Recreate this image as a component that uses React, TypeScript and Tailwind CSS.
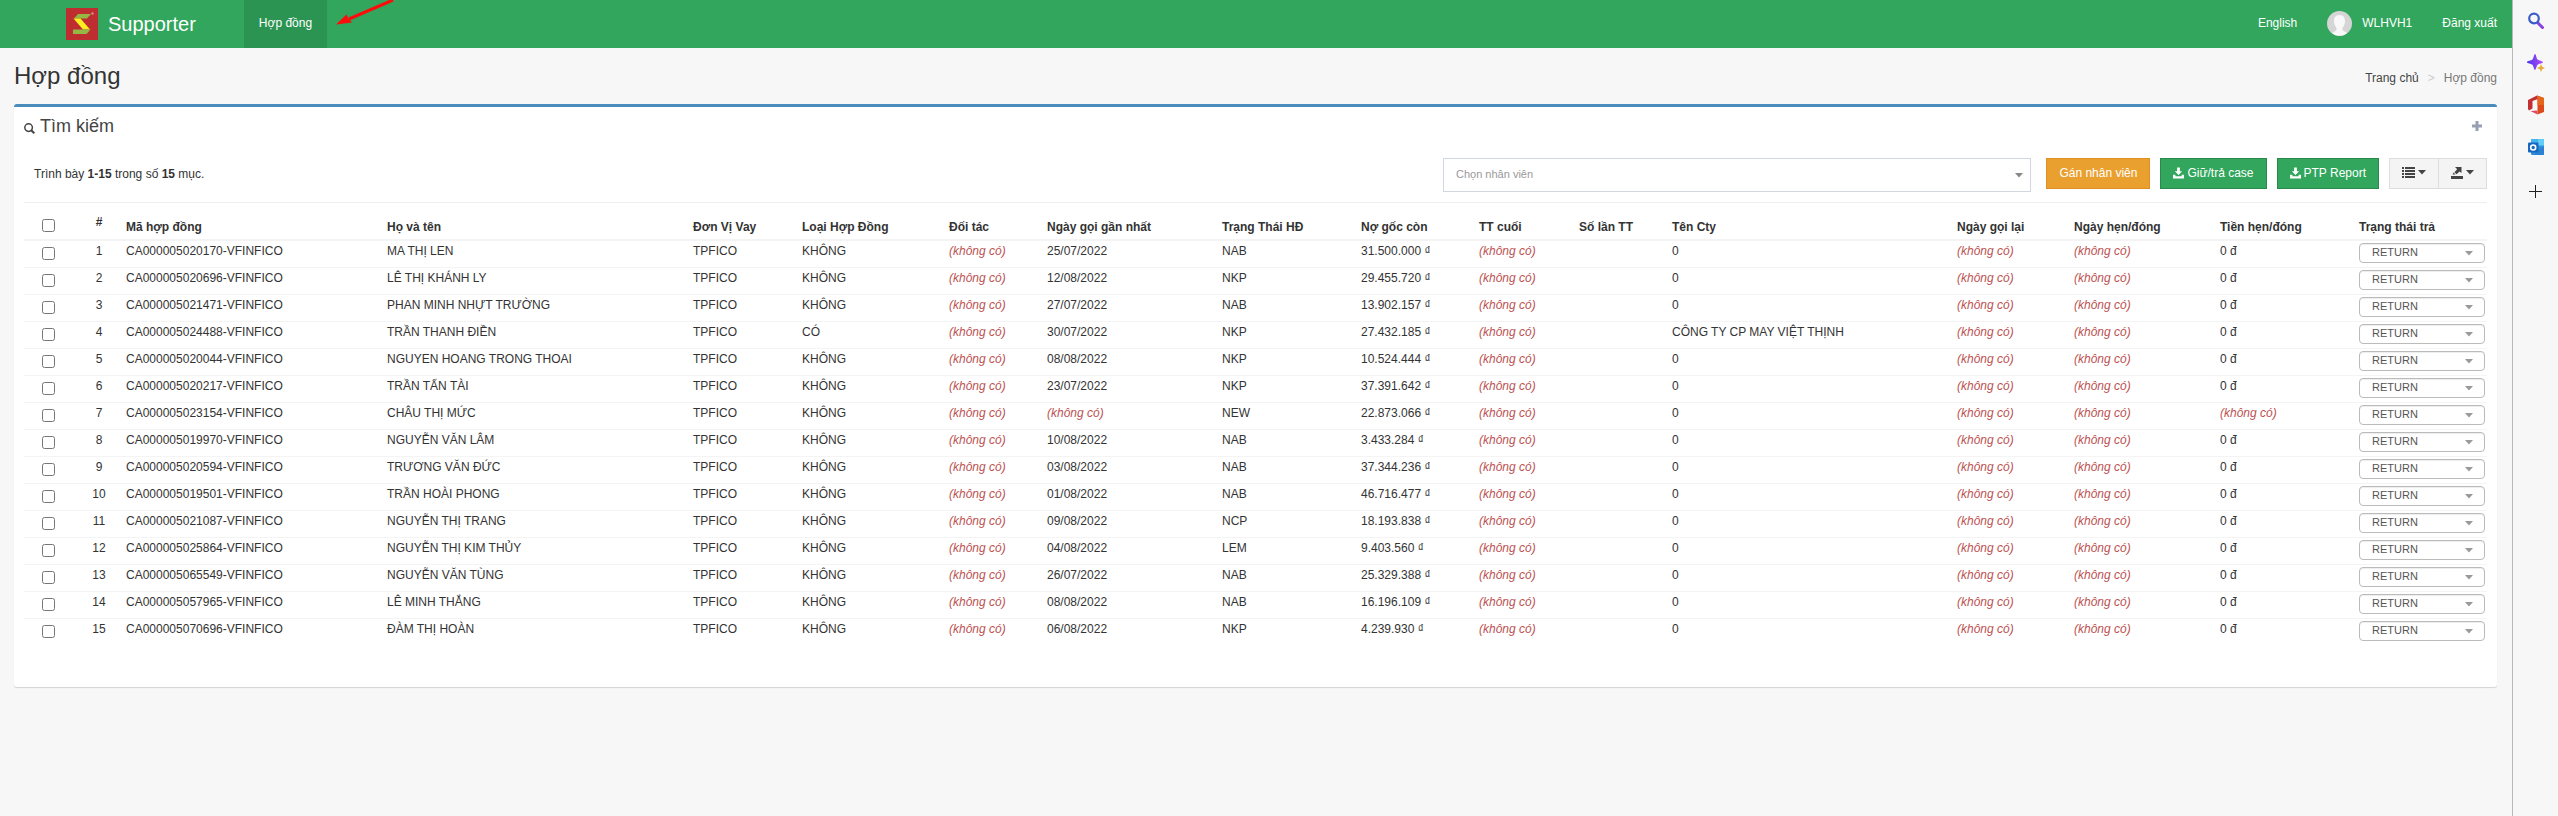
type Contract = {
  code: string;
  name: string;
  type?: string;
  lastCall?: string;
  status: string;
  debt: string;
  company?: string;
  promised?: string;
};

const contracts: Contract[] = [
  { code: "CA000005020170-VFINFICO", name: "MA THỊ LEN", lastCall: "25/07/2022", status: "NAB", debt: "31.500.000 ₫", promised: "0 đ" },
  { code: "CA000005020696-VFINFICO", name: "LÊ THỊ KHÁNH LY", lastCall: "12/08/2022", status: "NKP", debt: "29.455.720 ₫", promised: "0 đ" },
  { code: "CA000005021471-VFINFICO", name: "PHAN MINH NHỰT TRƯỜNG", lastCall: "27/07/2022", status: "NAB", debt: "13.902.157 ₫", promised: "0 đ" },
  { code: "CA000005024488-VFINFICO", name: "TRẦN THANH ĐIỀN", type: "CÓ", lastCall: "30/07/2022", status: "NKP", debt: "27.432.185 ₫", company: "CÔNG TY CP MAY VIỆT THỊNH", promised: "0 đ" },
  { code: "CA000005020044-VFINFICO", name: "NGUYEN HOANG TRONG THOAI", lastCall: "08/08/2022", status: "NKP", debt: "10.524.444 ₫", promised: "0 đ" },
  { code: "CA000005020217-VFINFICO", name: "TRẦN TẤN TÀI", lastCall: "23/07/2022", status: "NKP", debt: "37.391.642 ₫", promised: "0 đ" },
  { code: "CA000005023154-VFINFICO", name: "CHÂU THỊ MỨC", status: "NEW", debt: "22.873.066 ₫" },
  { code: "CA000005019970-VFINFICO", name: "NGUYỄN VĂN LÂM", lastCall: "10/08/2022", status: "NAB", debt: "3.433.284 ₫", promised: "0 đ" },
  { code: "CA000005020594-VFINFICO", name: "TRƯƠNG VĂN ĐỨC", lastCall: "03/08/2022", status: "NAB", debt: "37.344.236 ₫", promised: "0 đ" },
  { code: "CA000005019501-VFINFICO", name: "TRẦN HOÀI PHONG", lastCall: "01/08/2022", status: "NAB", debt: "46.716.477 ₫", promised: "0 đ" },
  { code: "CA000005021087-VFINFICO", name: "NGUYỄN THỊ TRANG", lastCall: "09/08/2022", status: "NCP", debt: "18.193.838 ₫", promised: "0 đ" },
  { code: "CA000005025864-VFINFICO", name: "NGUYỄN THỊ KIM THỦY", lastCall: "04/08/2022", status: "LEM", debt: "9.403.560 ₫", promised: "0 đ" },
  { code: "CA000005065549-VFINFICO", name: "NGUYỄN VĂN TÙNG", lastCall: "26/07/2022", status: "NAB", debt: "25.329.388 ₫", promised: "0 đ" },
  { code: "CA000005057965-VFINFICO", name: "LÊ MINH THẮNG", lastCall: "08/08/2022", status: "NAB", debt: "16.196.109 ₫", promised: "0 đ" },
  { code: "CA000005070696-VFINFICO", name: "ĐÀM THỊ HOÀN", lastCall: "06/08/2022", status: "NKP", debt: "4.239.930 ₫", promised: "0 đ" },
];

const columns = [
  { label: "Mã hợp đồng", width: "w-[261px]" },
  { label: "Họ và tên", width: "w-[306px]" },
  { label: "Đơn Vị Vay", width: "w-[109px]" },
  { label: "Loại Hợp Đồng", width: "w-[147px]" },
  { label: "Đối tác", width: "w-[98px]" },
  { label: "Ngày gọi gần nhất", width: "w-[175px]" },
  { label: "Trạng Thái HĐ", width: "w-[139px]" },
  { label: "Nợ gốc còn", width: "w-[118px]" },
  { label: "TT cuối", width: "w-[100px]" },
  { label: "Số lần TT", width: "w-[93px]" },
  { label: "Tên Cty", width: "w-[285px]" },
  { label: "Ngày gọi lại", width: "w-[117px]" },
  { label: "Ngày hẹn/đóng", width: "w-[146px]" },
  { label: "Tiền hẹn/đóng", width: "w-[139px]" },
  { label: "Trạng thái trả", width: "w-[133px]" },
];

function Caret({ className = "" }: { className?: string }) {
  return (
    <svg width="8" height="5" viewBox="0 0 8 5" fill="currentColor" className={className}>
      <path d="M0 0H8L4 4.600Z" />
    </svg>
  );
}

function DownloadIcon() {
  return (
    <svg width="11" height="12" viewBox="0 0 12 12" fill="currentColor">
      <path d="M4.500 0H7.500V4H10L6 8.200L2 4H4.500Z" />
      <path d="M0 8H2.600V9.600H9.400V8H12V12H0Z" />
    </svg>
  );
}

function Missing() {
  return <span className="italic text-[#bc5252]">(không có)</span>;
}

function Header() {
  return (
    <header className="relative flex h-12 items-center justify-between bg-[#31a65c] text-white">
      <div className="flex h-full items-center">
        <a href="#" className="ml-[66px] mr-12 flex items-center gap-2.5 text-xl leading-8">
          <svg width="32" height="32" viewBox="0 0 32 32">
            <rect width="32" height="32" fill="#be2d30" />
            <path d="M12 6H25L21 10.500H8Z" fill="#93b843" />
            <path d="M7.500 10.500H14.500L24 21.500H17Z" fill="#fdee21" />
            <path d="M7 21.500H24.500L20.500 26H7Z" fill="#93b843" />
            <circle cx="26.500" cy="5.500" r="1.200" fill="#d98d8d" />
          </svg>
          Supporter
        </a>
        <a href="#contracts" className="flex h-full items-center bg-[#2c9452] px-[15px] pb-0.5">
          Hợp đồng
        </a>
      </div>
      <nav className="flex items-center gap-[30px] px-[15px] pb-0.5">
        <a href="#english">English</a>
        <a href="#profile" className="flex items-center gap-2.5">
          <svg width="25" height="25" viewBox="0 0 25 25">
            <circle cx="12.500" cy="12.500" r="12.500" fill="#d5d5d5" />
            <path
              d="M12.500 4C8.500 4 7 6.800 7 10C7 13 8.200 15.400 9.500 16.800V19C8.600 20.400 6.400 20.600 5 22.200A12.500 12.500 0 0 0 20 22.200C18.600 20.600 16.400 20.400 15.500 19V16.800C16.800 15.400 18 13 18 10C18 6.800 16.500 4 12.500 4Z"
              fill="#f8f8f8"
            />
          </svg>
          WLHVH1
        </a>
        <a href="#logout">Đăng xuất</a>
      </nav>
      {/* pointer to the active menu item */}
      <svg width="60" height="26" viewBox="0 0 60 26" className="absolute left-[336px] top-0">
        <path d="M57 0L13 19" stroke="#fe0b0b" strokeWidth="3" />
        <path d="M0 24.500L10.500 14.500L12.500 18.500L16 22.500Z" fill="#fe0b0b" />
      </svg>
    </header>
  );
}

function Toolbar() {
  return (
    <div className="flex items-start justify-between border-b border-[#eee] pb-2.5 pl-2.5">
      <p className="leading-8">
        Trình bày <b>1-15</b> trong số <b>15</b> mục.
      </p>
      <div className="flex w-[1044px] items-start gap-2.5">
        <div className="relative mr-[5px] flex-1">
          <select
            aria-label="Chọn nhân viên"
            className="block h-[34px] w-full appearance-none border border-[#d2d6de] bg-white px-3 pb-0.5 text-[11px] text-[#999]"
          >
            <option>Chọn nhân viên</option>
          </select>
          <Caret className="pointer-events-none absolute right-2 top-[15px] text-[#888]" />
        </div>
        <button className="h-[31px] border border-[#df9020] bg-[#eaa02e] px-3 pb-0.5 text-white">Gán nhân viên</button>
        <button className="flex h-[31px] items-center gap-[3px] border border-[#2a8a4c] bg-[#31a65c] px-3 pb-0.5 text-white">
          <DownloadIcon />
          Giữ/trả case
        </button>
        <button className="flex h-[31px] items-center gap-[3px] border border-[#2a8a4c] bg-[#31a65c] px-3 pb-0.5 text-white">
          <DownloadIcon />
          PTP Report
        </button>
        <div className="flex h-[31px] divide-x divide-[#ddd] border border-[#ddd] bg-[#f4f4f4] text-[#444]">
          <button aria-label="Cột" className="flex items-center gap-[3px] px-3 pb-0.5">
            <svg width="13" height="12" viewBox="0 0 13 12" fill="currentColor">
              <path d="M0 0H2V2H0ZM3 0H13V2H3ZM0 3H2V5H0ZM3 3H13V5H3ZM0 6H2V8H0ZM3 6H13V8H3ZM0 9H2V11H0ZM3 9H13V11H3Z" />
            </svg>
            <Caret />
          </button>
          <button aria-label="Xuất" className="flex items-center gap-[3px] px-3 pb-0.5">
            <svg width="12" height="12" viewBox="0 0 12 12" fill="currentColor">
              <path d="M4 0H10.500V6L8.600 4.400L5.600 7.200L3.400 5.200L6.200 2.200Z" />
              <path d="M2.500 5.500L4.500 7.500H1.500Z" />
              <path d="M0 9H12V12H0Z" />
            </svg>
            <Caret />
          </button>
        </div>
      </div>
    </div>
  );
}

function ContractTable() {
  return (
    <table className="w-full border-separate border-spacing-0 whitespace-nowrap">
      <thead>
        <tr className="h-[38px] text-left *:border-b-2 *:border-[#f4f4f4]">
          <th className="w-[53px] pl-[18px] pt-2">
            <input type="checkbox" aria-label="Chọn tất cả" className="block size-[13px]" />
          </th>
          <th className="w-11 pt-0.5 text-center align-middle">#</th>
          {columns.map((column) => (
            <th key={column.label} className={`${column.width} pb-1 pl-[5px] align-bottom`}>
              {column.label}
            </th>
          ))}
        </tr>
      </thead>
      <tbody>
        {contracts.map((row, i) => (
          <tr
            key={row.code}
            className="h-[27px] *:border-b *:border-[#f4f4f4] *:pl-[5px] *:pt-0.5 *:align-top last:*:border-transparent"
          >
            <td>
              <input type="checkbox" aria-label={`Chọn ${row.code}`} className="ml-[13px] mt-1 block size-[13px]" />
            </td>
            <td className="pr-[5px] text-center">{i + 1}</td>
            <td>{row.code}</td>
            <td>{row.name}</td>
            <td>TPFICO</td>
            <td>{row.type ?? "KHÔNG"}</td>
            <td><Missing /></td>
            <td>{row.lastCall ?? <Missing />}</td>
            <td>{row.status}</td>
            <td>{row.debt}</td>
            <td><Missing /></td>
            <td></td>
            <td>{row.company ?? "0"}</td>
            <td><Missing /></td>
            <td><Missing /></td>
            <td>{row.promised ?? <Missing />}</td>
            <td className="pr-0.5">
              <div className="relative">
                <select
                  aria-label={`Trạng thái trả ${row.code}`}
                  className="block h-5 w-full appearance-none rounded border border-[#bbb] bg-white px-3 pb-0.5 text-[11px] text-[#555] shadow-[inset_0_1px_1px_rgba(0,0,0,0.075)]"
                >
                  <option>RETURN</option>
                </select>
                <Caret className="pointer-events-none absolute right-3 top-2 text-[#999]" />
              </div>
            </td>
          </tr>
        ))}
      </tbody>
    </table>
  );
}

function BrowserSidebar() {
  return (
    <aside className="flex w-[46px] shrink-0 flex-col border-l border-[#b8b8b8] bg-[#f7f7f7] *:flex *:h-[42px] *:items-center *:justify-center">
      <button aria-label="Search">
        <svg width="18" height="18" viewBox="0 0 18 18" fill="none">
          <path d="M11 11L15.500 15.500" stroke="#8a3fe0" strokeWidth="3" strokeLinecap="round" />
          <circle cx="7" cy="6.500" r="4.800" stroke="#3a5cc8" strokeWidth="2.200" />
        </svg>
      </button>
      <button aria-label="Discover">
        <svg width="18" height="18" viewBox="0 0 18 18">
          <defs>
            <linearGradient id="spark" x1="0" x2="1">
              <stop offset="0" stopColor="#4a35f0" />
              <stop offset="1" stopColor="#b64cf5" />
            </linearGradient>
          </defs>
          <path d="M8 0C9 0 9.400 4.400 10.600 5.600S16 7 16 8.200S11.800 9.600 10.600 10.800S9 16 8 16S6.600 12 5.400 10.800S0 9.400 0 8.200S4.200 6.800 5.400 5.600S7 0 8 0Z" fill="url(#spark)" />
          <path d="M14 10L15.200 12.800L18 14L15.200 15.200L14 18L12.800 15.200L10 14L12.800 12.800Z" fill="#e8ac38" />
        </svg>
      </button>
      <button aria-label="Office">
        <svg width="16" height="20" viewBox="0 0 16 20">
          <path d="M0 5L9 0.500L10 4L4.500 6V13.500L1 15.500L0 14Z" fill="#c22f35" />
          <path d="M9 0.500L16 3V17L9.500 19.500V4Z" fill="#dc4a1c" />
          <path d="M9 0.500L16 3V10H9.500V4Z" fill="#e3661c" />
          <path d="M2.500 16L9.500 15.500V19.500Z" fill="#e0485c" />
        </svg>
      </button>
      <button aria-label="Outlook">
        <svg width="16" height="16" viewBox="0 0 16 16">
          <rect x="3" width="13" height="16" rx="1" fill="#2f8fdc" />
          <path d="M3 1A1 1 0 0 1 4 0H15A1 1 0 0 1 16 1V7H3Z" fill="#45b5ee" />
          <path d="M10 0H15A1 1 0 0 1 16 1V6H10Z" fill="#62cdf7" />
          <path d="M9 12L16 7.500V15A1 1 0 0 1 15 16H6Z" fill="#2b82d4" />
          <rect y="3.500" width="10.500" height="10" rx="1" fill="#1868c0" />
          <circle cx="5.200" cy="8.500" r="2.500" fill="none" stroke="#fff" strokeWidth="1.600" />
        </svg>
      </button>
      <button aria-label="Add" className="pt-1">
        <svg width="13" height="13" viewBox="0 0 13 13" stroke="#222">
          <path d="M6.500 0V13M0 6.500H13" />
        </svg>
      </button>
    </aside>
  );
}

export default function App() {
  return (
    <div className="flex min-h-screen bg-[#f7f7f7] font-['Liberation_Sans',Arial,sans-serif] text-xs leading-4 text-[#333]">
      <div className="min-w-0 flex-1">
        <Header />
        <main className="px-[15px] pl-3.5">
          <div className="flex h-14 items-center justify-between">
            <h1 className="text-2xl">Hợp đồng</h1>
            <nav className="flex gap-[9px] pt-1">
              <a href="#home" className="text-[#444]">Trang chủ</a>
              <span className="text-[#ccc]">&gt;</span>
              <span className="text-[#777]">Hợp đồng</span>
            </nav>
          </div>
          <section className="rounded-[3px] border-t-3 border-[#4a8dbc] bg-white px-2.5 pb-[41px] shadow-[0_1px_1px_rgba(0,0,0,0.15)]">
            <div className="mb-[13px] flex h-[38px] items-center justify-between pr-[5px]">
              <h2 className="flex items-center gap-[5px] text-lg leading-6 text-[#444]">
                <svg width="11" height="11" viewBox="0 0 11 11" fill="none" stroke="currentColor" strokeWidth="1.500" className="mt-1">
                  <circle cx="4.600" cy="4.600" r="3.800" />
                  <path d="M7.200 7.200L10.300 10.300" strokeWidth="2" />
                </svg>
                Tìm kiếm
              </h2>
              <button aria-label="Mở rộng" className="text-[#97a0b3]">
                <svg width="10" height="10" viewBox="0 0 10 10" fill="currentColor">
                  <path d="M3.500 0H6.500V3.500H10V6.500H6.500V10H3.500V6.500H0V3.500H3.500Z" />
                </svg>
              </button>
            </div>
            <Toolbar />
            <ContractTable />
          </section>
        </main>
      </div>
      <BrowserSidebar />
    </div>
  );
}
